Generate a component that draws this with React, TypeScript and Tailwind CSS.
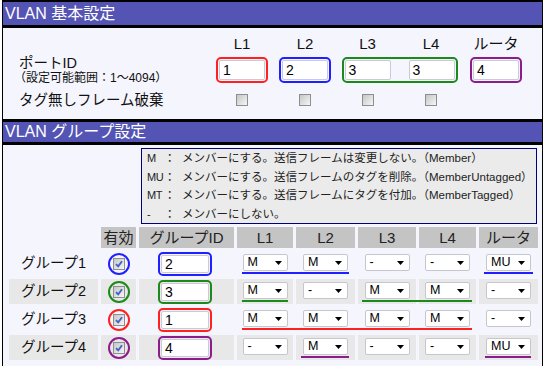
import React from "react";

type Tone = "red" | "blue" | "green" | "purple";

const BORDER: Record<Tone, string> = {
  red: "border-[#ff2020]",
  blue: "border-[#2020ff]",
  green: "border-[#1b8a1b]",
  purple: "border-[#8c1c8c]",
};

const FILL: Record<Tone, string> = {
  red: "bg-[#ff2020]",
  blue: "bg-[#2020ff]",
  green: "bg-[#1b8a1b]",
  purple: "bg-[#8c1c8c]",
};

const COL = [
  "col-start-1",
  "col-start-2",
  "col-start-3",
  "col-start-4",
  "col-start-5",
  "col-start-6",
  "col-start-7",
  "col-start-8",
];

const groups: {
  name: string;
  tone: Tone;
  id: string;
  ports: string[];
  shade: boolean;
  lines: string[];
}[] = [
  {
    name: "グループ1",
    tone: "blue",
    id: "2",
    ports: ["M", "M", "-", "-", "MU"],
    shade: false,
    lines: ["col-start-4 col-end-6 ml-[5px] mr-[6px]", "col-start-8 col-end-9 ml-[5px] mr-[5px]"],
  },
  {
    name: "グループ2",
    tone: "green",
    id: "3",
    ports: ["M", "-", "M", "M", "-"],
    shade: true,
    lines: ["col-start-4 col-end-5 ml-[5px] mr-[5px]", "col-start-6 col-end-8 ml-[4px] mr-[4px]"],
  },
  {
    name: "グループ3",
    tone: "red",
    id: "1",
    ports: ["M", "M", "M", "M", "-"],
    shade: false,
    lines: ["col-start-4 col-end-8 ml-[5px] mr-[4px]"],
  },
  {
    name: "グループ4",
    tone: "purple",
    id: "4",
    ports: ["-", "M", "-", "-", "MU"],
    shade: true,
    lines: ["col-start-5 col-end-6 ml-[5px] mr-[6px]", "col-start-8 col-end-9 ml-[6px] mr-[7px]"],
  },
];

const legend = [
  ["M", "メンバーにする。送信フレームは変更しない。（Member）"],
  ["MU", "メンバーにする。送信フレームのタグを削除。（MemberUntagged）"],
  ["MT", "メンバーにする。送信フレームにタグを付加。（MemberTagged）"],
  ["-", "メンバーにしない。"],
];

function Field({ value, className = "" }: { value: string; className?: string }) {
  return (
    <div
      className={`flex h-full items-center rounded-[2px] border border-[#c9c9d8] bg-white pl-[3px] text-[14px] leading-none text-black ${className}`}
    >
      {value}
    </div>
  );
}

function PortBox({ tone, values }: { tone: Tone; values: string[] }) {
  return (
    <div className={`flex h-[26px] gap-[18px] rounded-[5px] border-2 p-[1px] ${BORDER[tone]}`}>
      {values.map((v, i) => (
        <Field key={i} value={v} className="w-[46px]" />
      ))}
    </div>
  );
}

function Check({ checked = false }: { checked?: boolean }) {
  return (
    <div className="relative h-[12px] w-[12px] border border-[#8e8e8e] bg-linear-to-br from-[#c6c6c6] to-[#f6f6f6]">
      {checked && (
        <svg className="absolute left-[1px] top-[1px]" width="8" height="8" viewBox="0 0 8 8">
          <path d="M1 4.2 L3.2 6.4 L7 1.2" fill="none" stroke="#3d62c8" strokeWidth="1.8" />
        </svg>
      )}
    </div>
  );
}

function Pick({ value }: { value: string }) {
  return (
    <div className="flex h-[17px] w-[45px] items-center justify-between rounded-[2px] border border-[#c6c6ce] bg-white pl-[4px] pr-[5px] text-[12.5px] leading-none text-black">
      <span>{value}</span>
      <svg width="7" height="4" viewBox="0 0 7 4">
        <path d="M0 0h7L3.5 4z" fill="#000" />
      </svg>
    </div>
  );
}

function Heading({ title, top }: { title: string; top: string }) {
  return (
    <div
      className={`flex items-center border-b-[3px] border-black bg-[#5454b4] pl-[2px] text-[16px] text-white ${top}`}
    >
      {title}
    </div>
  );
}

export default function App() {
  return (
    <div className="h-[366px] w-[546px] overflow-hidden bg-white font-['Liberation_Sans','Noto_Sans_CJK_JP',sans-serif] text-[#111]">
      <div className="ml-[2px] h-full w-[541px] border-x border-black bg-[#f5f5fd]">
        <Heading title="VLAN 基本設定" top="h-[28px] border-t-2" />

        {/* 基本設定 */}
        <div className="pb-[9px] pt-[6px]">
          <div className="grid h-[18px] grid-cols-[207px_64px_62px_63px_64px_66px] items-center text-center text-[15px] leading-none">
            <div />
            <div>L1</div>
            <div>L2</div>
            <div>L3</div>
            <div>L4</div>
            <div>ルータ</div>
          </div>

          <div className="mt-[3px] grid h-[30px] grid-cols-[207px_64px_62px_63px_64px_66px] items-center">
            <div className="flex flex-col pl-[16px]">
              <div className="text-[14.5px] leading-[16px]">ポートID</div>
              <div className="-ml-[5px] text-[12px] leading-[14px]">（設定可能範囲：1〜4094）</div>
            </div>
            <div className="justify-self-center">
              <PortBox tone="red" values={["1"]} />
            </div>
            <div className="justify-self-center">
              <PortBox tone="blue" values={["2"]} />
            </div>
            <div className="col-span-2 justify-self-center">
              <PortBox tone="green" values={["3", "3"]} />
            </div>
            <div className="justify-self-center">
              <PortBox tone="purple" values={["4"]} />
            </div>
          </div>

          <div className="mt-[5px] grid h-[20px] grid-cols-[207px_64px_62px_63px_64px_66px] items-center">
            <div className="pl-[16px] text-[14.5px] leading-none">タグ無しフレーム破棄</div>
            <div className="justify-self-center">
              <Check />
            </div>
            <div className="justify-self-center">
              <Check />
            </div>
            <div className="justify-self-center">
              <Check />
            </div>
            <div className="justify-self-center">
              <Check />
            </div>
            <div />
          </div>
        </div>

        <Heading title="VLAN グループ設定" top="h-[26px] border-t-[3px]" />

        {/* グループ設定 */}
        <div className="pt-[3px]">
          <div className="ml-[138px] w-[396px] border border-[#00007a] bg-[#ebebeb] pl-[5px] text-[11.5px] leading-[18.5px] text-[#222]">
            {legend.map(([code, text]) => (
              <div key={code} className="flex">
                <span className="w-[17px] text-[11px] tracking-[-0.3px]">{code}</span>
                <span className="w-[18px]">：</span>
                <span>{text}</span>
              </div>
            ))}
          </div>

          <div className="ml-[6px] mt-[3px] grid h-[21px] grid-cols-[89px_35px_95px_56px_59px_58px_57px_59px] gap-x-[3px] text-[15px] leading-none text-[#222]">
            <div />
            {["有効", "グループID", "L1", "L2", "L3", "L4", "ルータ"].map((h) => (
              <div key={h} className="flex items-center justify-center bg-[#c4c4c4]">
                {h}
              </div>
            ))}
          </div>

          {groups.map((g) => {
            const cell = g.shade ? "bg-[#e8e8e8]" : "";
            return (
              <div
                key={g.name}
                className="ml-[6px] mt-[3px] grid h-[25px] grid-cols-[89px_35px_95px_56px_59px_58px_57px_59px] gap-x-[3px]"
              >
                <div className={`col-start-1 row-start-1 flex items-center justify-center text-[14.5px] leading-none ${cell}`}>
                  {g.name}
                </div>
                <div className={`col-start-2 row-start-1 flex items-center justify-center ${cell}`}>
                  <div className={`flex h-[22px] w-[22px] items-center justify-center rounded-full border-2 ${BORDER[g.tone]}`}>
                    <Check checked />
                  </div>
                </div>
                <div className={`col-start-3 row-start-1 flex items-center pl-[19px] ${cell}`}>
                  <div className={`h-[24px] w-[54px] rounded-[5px] border-2 p-[1px] ${BORDER[g.tone]}`}>
                    <Field value={g.id} />
                  </div>
                </div>
                {g.ports.map((p, i) => (
                  <div key={i} className={`${COL[i + 3]} row-start-1 flex justify-center pt-[3px] ${cell}`}>
                    <Pick value={p} />
                  </div>
                ))}
                {g.lines.map((l) => (
                  <div key={l} className={`row-start-1 mb-[2px] h-[2px] self-end ${l} ${FILL[g.tone]}`} />
                ))}
              </div>
            );
          })}
        </div>
      </div>
    </div>
  );
}
